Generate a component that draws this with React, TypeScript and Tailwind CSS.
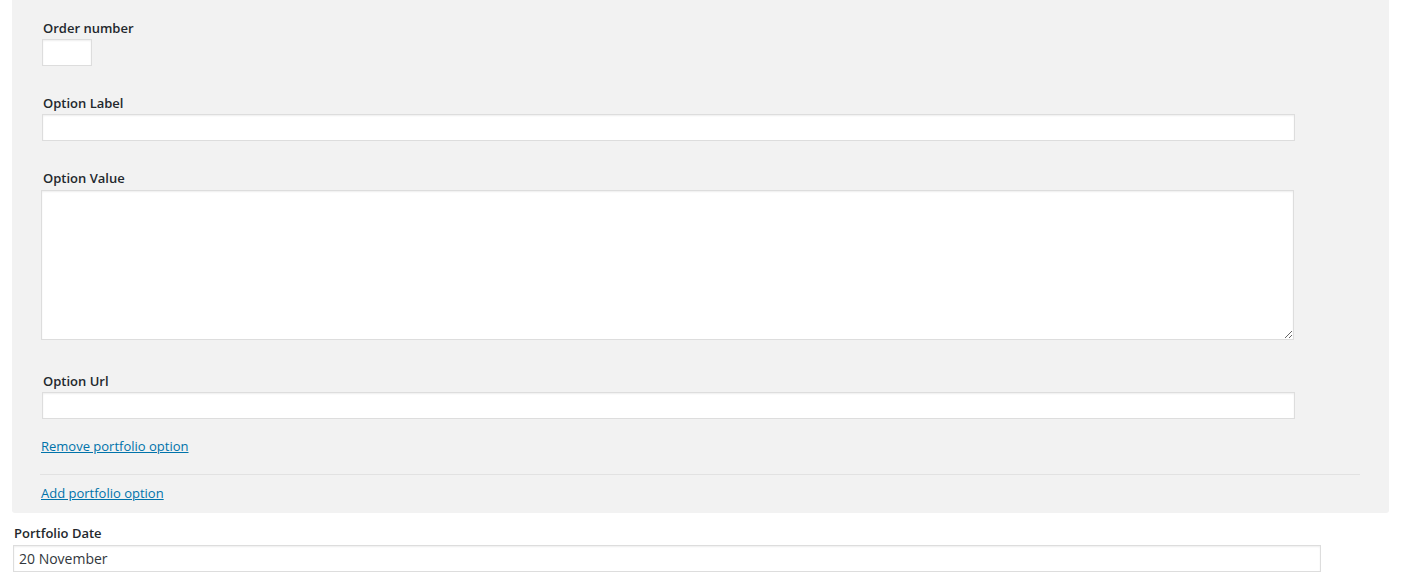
import React from 'react';

const field = 'block border border-[#dddddd] bg-white shadow-[inset_0_1px_2px_rgba(0,0,0,0.07)] outline-none';
const lbl = 'block text-[13px] leading-[18px] font-[560]';

export default function App() {
  return (
    <div className="w-[1401px] h-[586px] bg-white text-[#23282d] font-['Open_Sans',sans-serif] overflow-hidden">
      {/* repeatable options panel */}
      <div className="ml-[12px] w-[1377px] bg-[#f2f2f2] rounded-b-[3px] pl-[28px] pt-[19px] pb-[11px]">
        <label className={`${lbl} ml-[3px]`}>Order number</label>
        <input className={`${field} ml-[2px] mt-[2px] w-[50px] h-[27px]`} />

        <label className={`${lbl} ml-[3px] mt-[28px]`}>Option Label</label>
        <input className={`${field} ml-[2px] mt-[2px] w-[1253px] h-[27px]`} />

        <label className={`${lbl} ml-[3px] mt-[28px]`}>Option Value</label>
        <textarea className={`${field} ml-[1px] mt-[3px] w-[1253px] h-[150px]`} />

        <label className={`${lbl} ml-[3px] mt-[32px]`}>Option Url</label>
        <input className={`${field} ml-[2px] mt-[2px] w-[1253px] h-[27px]`} />

        <a href="#" className="block w-fit ml-[1px] mt-[18px] text-[13px] leading-[18px] text-[#0073aa] underline">
          Remove portfolio option
        </a>

        <div className="mt-[19px] w-[1320px] border-t border-[#e2e2e2]" />

        <a href="#" className="block w-fit ml-[1px] mt-[9px] text-[13px] leading-[18px] text-[#0073aa] underline">
          Add portfolio option
        </a>
      </div>

      <label className={`${lbl} ml-[14px] mt-[11px]`}>Portfolio Date</label>
      <input
        defaultValue="20 November"
        className={`${field} ml-[13px] mt-[3px] w-[1308px] h-[27px] px-[5px] text-[14px] text-[#32373c]`}
      />
    </div>
  );
}
